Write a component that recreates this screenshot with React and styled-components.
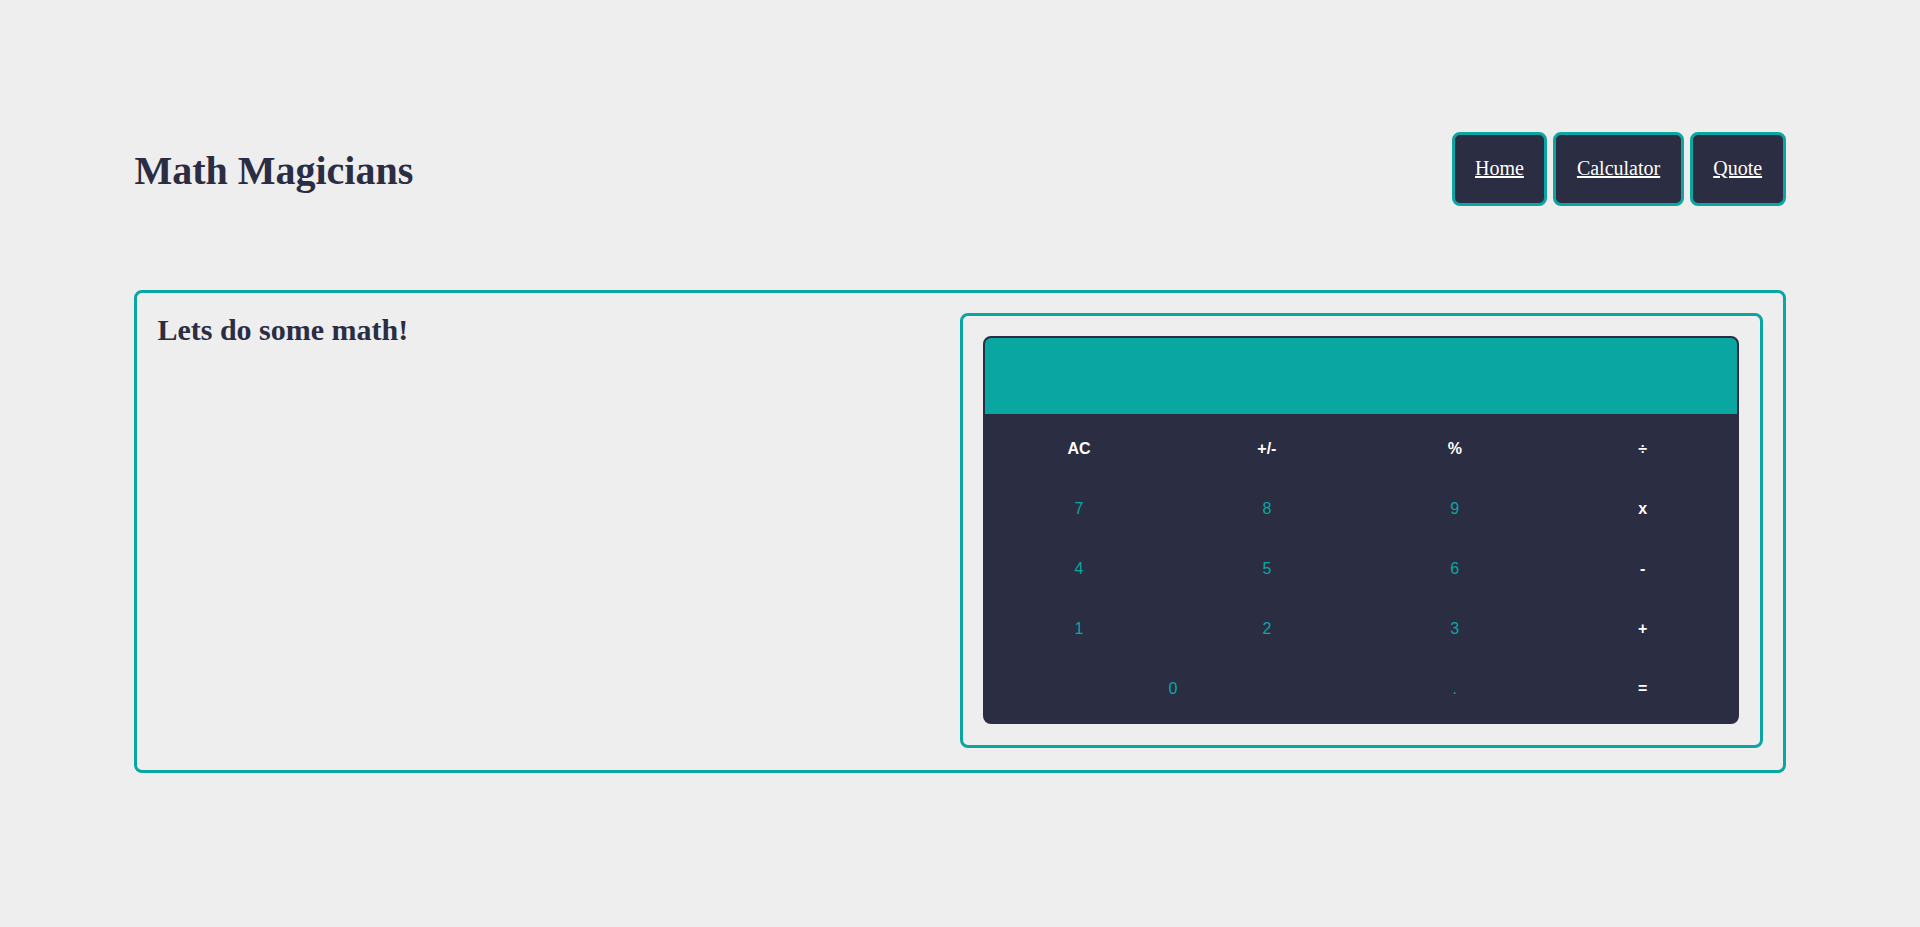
import styled, { createGlobalStyle } from "styled-components";

const teal = "#0aa6a2";
const dark = "#2b2d42";

const GlobalStyle = createGlobalStyle`
  body {
    margin: 0;
    background: #eee;
    font-family: "Liberation Serif", "Times New Roman", serif;
    color: ${dark};
  }
`;

const Page = styled.div`
  width: 86%;
  margin: 0 auto;
  padding-top: 133px;
`;

const Header = styled.header`
  display: flex;
  align-items: center;
  justify-content: space-between;
  height: 72px;
`;

const Logo = styled.h1`
  margin: 0;
  font-size: 40px;
  font-weight: bold;
  line-height: 46px;
  padding-top: 4px;
`;

const Nav = styled.ul`
  display: flex;
  gap: 6px;
  list-style: none;
  margin: 0;
  padding: 0;
`;

const NavItem = styled.li`
  background: ${dark};
  border: 3px solid ${teal};
  border-radius: 8px;
  padding: 21px 20.5px;
  line-height: 24px;
`;

const NavLink = styled.a`
  color: #fff;
  font-size: 20px;
  text-decoration: underline;
  cursor: pointer;
`;

const Card = styled.section`
  margin-top: 85px;
  border: 3px solid ${teal};
  border-radius: 8px;
  padding: 20px 20px 22px;
  display: grid;
  grid-template-columns: 1fr 1fr;
`;

const Intro = styled.div``;

const Heading = styled.h2`
  margin: 0;
  font-size: 30px;
  font-weight: bold;
`;

const CalcBox = styled.div`
  border: 3px solid ${teal};
  border-radius: 8px;
  padding: 20px 21px 21px 20px;
`;

const Calculator = styled.div`
  border: 2px solid ${dark};
  border-radius: 8px;
  overflow: hidden;
  background: ${dark};
  font-family: "Liberation Sans", Arial, sans-serif;
`;

const Display = styled.div`
  height: 76px;
  background: ${teal};
`;

const Keys = styled.div`
  display: grid;
  grid-template-columns: repeat(4, 1fr);
  grid-auto-rows: 60px;
  padding: 5px 0 3px;
`;

const Key = styled.button`
  border: none;
  padding: 0;
  background: transparent;
  font-family: inherit;
  font-size: 16px;
  font-weight: ${(p) => (p.$op ? "bold" : "normal")};
  color: ${(p) => (p.$op ? "#fff" : teal)};
  grid-column: span ${(p) => p.$span || 1};
  cursor: pointer;
`;

const keys = [
  ["AC", true], ["+/-", true], ["%", true], ["÷", true],
  ["7"], ["8"], ["9"], ["x", true],
  ["4"], ["5"], ["6"], ["-", true],
  ["1"], ["2"], ["3"], ["+", true],
  ["0", false, 2], ["."], ["=", true],
];

export default function App() {
  return (
    <>
      <GlobalStyle />
      <Page>
        <Header>
          <Logo>Math Magicians</Logo>
          <Nav>
            <NavItem><NavLink>Home</NavLink></NavItem>
            <NavItem><NavLink>Calculator</NavLink></NavItem>
            <NavItem><NavLink>Quote</NavLink></NavItem>
          </Nav>
        </Header>
        <Card>
          <Intro>
            <Heading>Lets do some math!</Heading>
          </Intro>
          <CalcBox>
            <Calculator>
              <Display />
              <Keys>
                {keys.map(([label, op, span]) => (
                  <Key key={label} $op={op} $span={span}>
                    {label}
                  </Key>
                ))}
              </Keys>
            </Calculator>
          </CalcBox>
        </Card>
      </Page>
    </>
  );
}
